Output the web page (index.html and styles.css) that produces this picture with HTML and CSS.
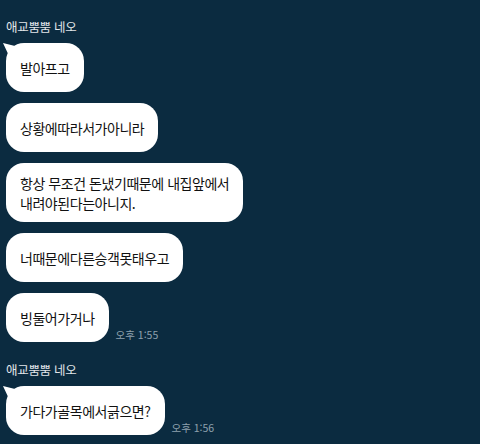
FILE: index.html
```html
<!DOCTYPE html>
<html lang="ko">
<head>
<meta charset="utf-8">
<link rel="stylesheet" href="styles.css">
</head>
<body>
<div class="chat">
  <div class="group">
    <div class="name">애교뿜뿜 네오</div>
    <div class="row"><div class="bubble first">발아프고</div></div>
    <div class="row"><div class="bubble">상황에따라서가아니라</div></div>
    <div class="row"><div class="bubble">항상 무조건 돈냈기때문에 내집앞에서<br>내려야된다는아니지.</div></div>
    <div class="row"><div class="bubble">너때문에다른승객못태우고</div></div>
    <div class="row"><div class="bubble">빙둘어가거나</div><span class="time">오후 1:55</span></div>
  </div>
  <div class="group">
    <div class="name">애교뿜뿜 네오</div>
    <div class="row"><div class="bubble first">가다가골목에서긁으면?</div><span class="time">오후 1:56</span></div>
  </div>
</div>
</body>
</html>
```
FILE: styles.css
```css
html, body {
  margin: 0;
  padding: 0;
  background: #0b2b40;
  width: 480px;
  height: 444px;
  overflow: hidden;
}
.chat {
  display: flex;
  flex-direction: column;
  gap: 20px;
  padding: 19px 0 0 6px;
  font-family: "Noto Sans CJK KR", "Noto Sans", sans-serif;
}
.group {
  display: flex;
  flex-direction: column;
  gap: 11px;
}
.name {
  color: #e2e6ea;
  font-size: 12.5px;
  line-height: 16px;
  margin-bottom: -3px;
  letter-spacing: -0.3px;
}
.row {
  display: flex;
  align-items: flex-end;
  gap: 7px;
}
.bubble {
  position: relative;
  display: flex;
  align-items: center;
  box-sizing: border-box;
  min-height: 49px;
  background: #fff;
  color: #111;
  font-size: 14px;
  letter-spacing: -0.45px;
  line-height: 20px;
  padding: 10px 14px 9px 14px;
  border-radius: 18px;
}
.bubble.first::before {
  content: "";
  position: absolute;
  left: -3px;
  top: 0;
  width: 14px;
  height: 12px;
  background: #fff;
  clip-path: polygon(0 0, 100% 30%, 100% 100%, 40% 100%);
}
.time {
  color: #8ea1ae;
  font-size: 10.5px;
  line-height: 12px;
  margin-bottom: 1px;
}
```
